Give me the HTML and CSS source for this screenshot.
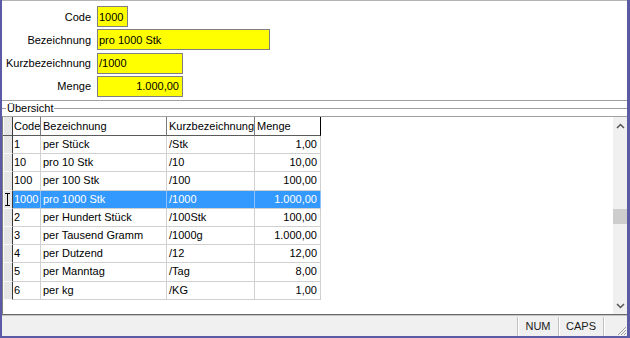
FILE: index.html
```html
<!DOCTYPE html>
<html lang="de">
<head>
    <meta charset="UTF-8">
    <meta name="viewport" content="width=device-width, initial-scale=1.0">
    <title>Mengeneinheiten</title>
    <link rel="stylesheet" href="styles.css">
</head>
<body>
    <div class="window">
        <div class="form">
            <label class="field-label" for="code">Code</label>
            <input id="code" class="field w-code" value="1000" readonly>
            <label class="field-label" for="bez">Bezeichnung</label>
            <input id="bez" class="field w-bez" value="pro 1000 Stk" readonly>
            <label class="field-label" for="kurz">Kurzbezeichnung</label>
            <input id="kurz" class="field w-kurz" value="/1000" readonly>
            <label class="field-label" for="menge">Menge</label>
            <input id="menge" class="field w-kurz num" value="1.000,00" readonly>
        </div>

        <fieldset class="group">
            <legend>Übersicht</legend>
            <div class="grid-frame">
                <div class="grid">
                    <div class="row head">
                        <div class="ind"></div><div>Code</div><div>Bezeichnung</div><div>Kurzbezeichnung</div><div class="last">Menge</div>
                    </div>
                    <div class="row">
                        <div class="ind"></div><div>1</div><div>per Stück</div><div>/Stk</div><div class="num">1,00</div>
                    </div>
                    <div class="row">
                        <div class="ind"></div><div>10</div><div>pro 10 Stk</div><div>/10</div><div class="num">10,00</div>
                    </div>
                    <div class="row">
                        <div class="ind"></div><div>100</div><div>per 100 Stk</div><div>/100</div><div class="num">100,00</div>
                    </div>
                    <div class="row selected">
                        <div class="ind">
                            <svg width="7" height="13" viewBox="0 0 7 13"><path d="M1 0.5h5M3.5 0.5v12M1 12.5h5" stroke="#000" stroke-width="1" fill="none"/></svg>
                        </div><div>1000</div><div>pro 1000 Stk</div><div>/1000</div><div class="num">1.000,00</div>
                    </div>
                    <div class="row">
                        <div class="ind"></div><div>2</div><div>per Hundert Stück</div><div>/100Stk</div><div class="num">100,00</div>
                    </div>
                    <div class="row">
                        <div class="ind"></div><div>3</div><div>per Tausend Gramm</div><div>/1000g</div><div class="num">1.000,00</div>
                    </div>
                    <div class="row">
                        <div class="ind"></div><div>4</div><div>per Dutzend</div><div>/12</div><div class="num">12,00</div>
                    </div>
                    <div class="row">
                        <div class="ind"></div><div>5</div><div>per Manntag</div><div>/Tag</div><div class="num">8,00</div>
                    </div>
                    <div class="row">
                        <div class="ind"></div><div>6</div><div>per kg</div><div>/KG</div><div class="num">1,00</div>
                    </div>
                </div>
                <div class="scrollbar">
                    <div class="sb-btn">
                        <svg width="9" height="6" viewBox="0 0 9 6"><path d="M1 5L4.5 1.5L8 5" stroke="#555" stroke-width="1.5" fill="none"/></svg>
                    </div>
                    <div class="sb-track"><div class="sb-thumb"></div></div>
                    <div class="sb-btn">
                        <svg width="9" height="6" viewBox="0 0 9 6"><path d="M1 1L4.5 4.5L8 1" stroke="#555" stroke-width="1.5" fill="none"/></svg>
                    </div>
                </div>
            </div>
        </fieldset>

        <div class="statusbar">
            <div class="status-main"></div>
            <div class="panel p-num">NUM</div>
            <div class="panel p-caps">CAPS</div>
            <div class="panel p-grip">
                <svg width="11" height="11" viewBox="0 0 11 11"><path d="M10 2L2 10M10 5L5 10M10 8L8 10" stroke="#a0a0a0" stroke-width="1" fill="none"/></svg>
            </div>
        </div>
    </div>
</body>
</html>
```

FILE: styles.css
```css
body {
    margin: 0;
    font-family: "Liberation Sans", Arial, sans-serif;
    font-size: 11px;
    color: #000;
}
.window {
    width: 630px;
    height: 338px;
    box-sizing: border-box;
    border-left: 2px solid #5b5ba5;
    border-right: 3px solid #5b5ba5;
    border-bottom: 2px solid #5b5ba5;
    background: #fff;
    display: flex;
    flex-direction: column;
}

/* Eingabebereich */
.form {
    height: 101px;
    box-sizing: border-box;
    border-top: 1px solid #b4b4b4;
    border-bottom: 1px solid #a0a0a0;
    padding-top: 5px;
    display: grid;
    grid-template-columns: 90px auto;
    grid-auto-rows: 21px;
    column-gap: 5px;
    row-gap: 2.33px;
    align-items: center;
}
.field-label {
    justify-self: end;
    margin-right: 1px;
}
.field {
    justify-self: start;
    height: 21px;
    box-sizing: border-box;
    margin: 0;
    padding: 0 1px;
    border: 1px solid #808080;
    background: #ffff00;
    font-family: inherit;
    font-size: 11px;
    color: #000;
    outline: none;
}
.field.num {
    text-align: right;
    padding-right: 3px;
}
.w-code { width: 31px; }
.w-bez { width: 173px; }
.w-kurz { width: 86px; }

/* Übersicht */
.group {
    margin: 0;
    padding: 0;
    border: 0;
    border-top: 1px solid #a0a0a0;
    min-width: 0;
}
.group legend {
    margin-left: 4px;
    padding: 0 1px;
    height: 14px;
    line-height: 14px;
}
.grid-frame {
    margin-top: 1px;
    height: 199px;
    box-sizing: border-box;
    border-top: 1px solid #a0a0a0;
    border-left: 1px solid #808080;
    border-bottom: 1px solid #6a6a6a;
    display: flex;
}
.grid {
    flex: 1;
}
.row {
    display: grid;
    grid-template-columns: 10px 28px 126px 88px 66px;
    height: 18.2px;
    line-height: 17px;
}
.row > div {
    box-sizing: border-box;
    border-right: 1px solid #d0d0d0;
    border-bottom: 1px solid #d0d0d0;
    padding-left: 1px;
    white-space: nowrap;
    overflow: hidden;
}
.row > div:nth-child(n+3) {
    padding-left: 2px;
}
.row > .num {
    text-align: right;
    padding-right: 3px;
}
.row > .ind {
    padding: 0;
    background: #e6e6e6;
    border-right: 1px solid #3a3a3a;
    border-bottom: 1px solid #fafafa;
    box-shadow: inset 1px 0 #fafafa;
    display: flex;
    align-items: center;
    justify-content: center;
}
.row.head {
    height: 19px;
    line-height: 18px;
}
.row.head > div {
    border-right-color: #7a7a7a;
    border-bottom-color: #5a5a5a;
}
.row.head > .last {
    border-right-color: #000;
}
.row.head > .ind {
    border-right-color: #3a3a3a;
}
.row.selected > div:not(.ind) {
    background: #3399ff;
    color: #fff;
    border-right-color: #8cc2f7;
    border-bottom-color: #d0d0d0;
}

/* Rollbalken */
.scrollbar {
    width: 14px;
    background: #f0f0f0;
    display: flex;
    flex-direction: column;
}
.sb-btn {
    height: 17px;
    display: flex;
    align-items: center;
    justify-content: center;
}
.sb-track {
    flex: 1;
}
.sb-thumb {
    margin-top: 75px;
    height: 15px;
    background: #cdcdcd;
}

/* Statusleiste */
.statusbar {
    flex: 1;
    border-top: 1px solid #c4c4c4;
    background: #f0f0f0;
    display: flex;
}
.status-main {
    flex: 1;
}
.panel {
    box-sizing: border-box;
    margin-top: 1px;
    border-left: 1px solid #c0c0c0;
    box-shadow: inset 1px 0 #fff;
    text-align: center;
    line-height: 19px;
    color: #1a1a1a;
}
.p-num { width: 41px; }
.p-caps { width: 45px; }
.p-grip {
    width: 24px;
    display: flex;
    align-items: flex-end;
    justify-content: flex-end;
}
```
